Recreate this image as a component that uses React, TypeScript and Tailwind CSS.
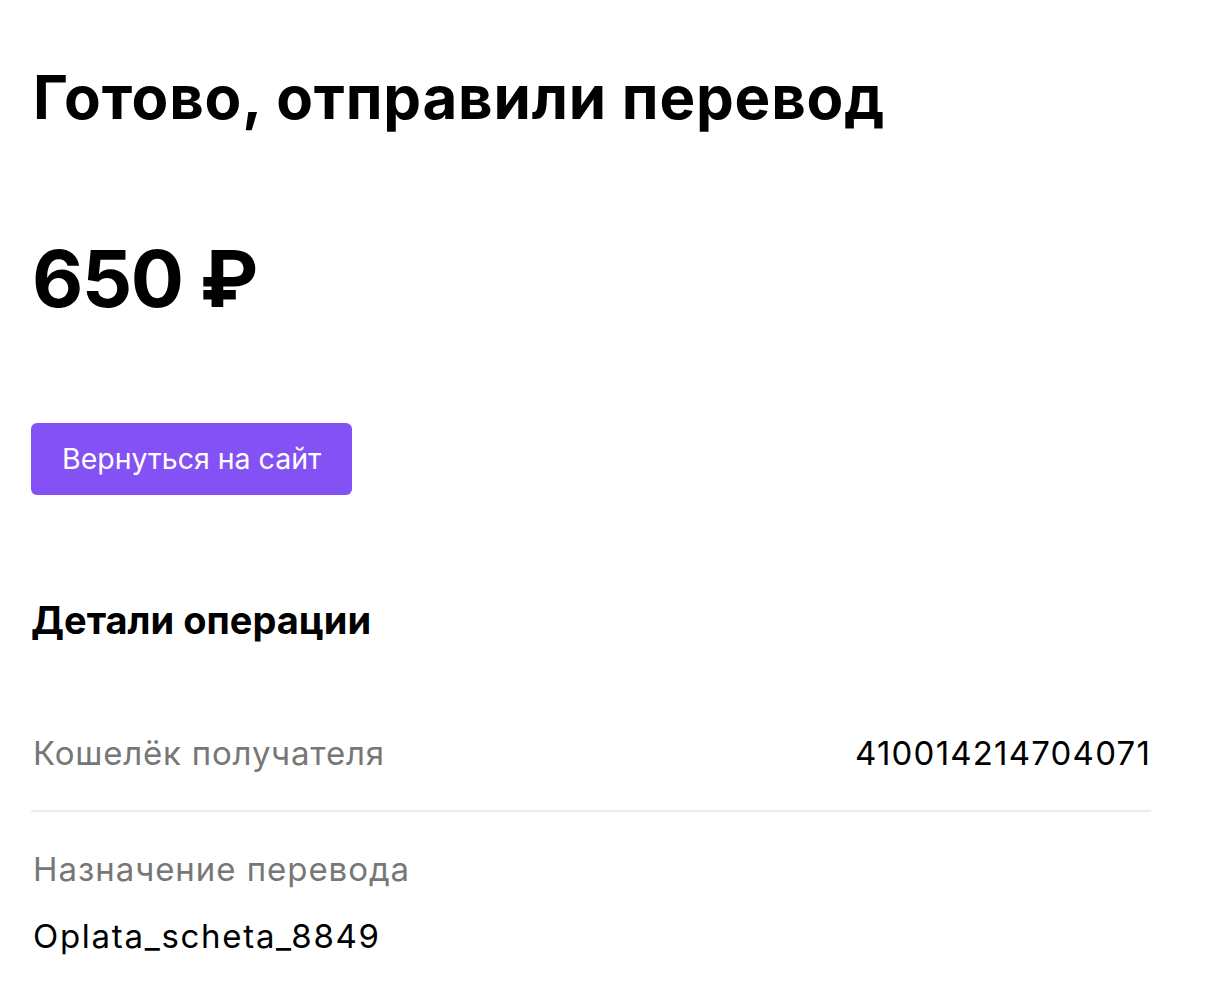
export default function App() {
  return (
    <div className="min-h-screen bg-white text-black">
      <div className="w-[1120px] ml-[31px] pt-[57px] font-['Inter',sans-serif]">
        <h1 className="text-[60px] leading-[80px] font-bold tracking-[0.8px] ml-[2px]">Готово, отправили перевод</h1>
        <div className="mt-[91px] text-[79px] leading-[100px] font-bold tracking-[-1.5px] ml-[1px]">650 ₽</div>
        <button className="mt-[95px] h-[72px] px-[31px] rounded-[6px] bg-[#8451F4] text-white text-[28.5px]">Вернуться на сайт</button>
        <h2 className="mt-[100px] text-[38px] leading-[50px] font-bold">Детали операции</h2>
        <div className="mt-[84px] flex justify-between items-center pb-[31px] border-b-2 border-[#ebebeb]">
          <span className="text-[33px] text-[#777777] tracking-[0.8px] ml-[2px]">Кошелёк получателя</span>
          <span className="text-[33px] tracking-[1.2px]">410014214704071</span>
        </div>
        <div className="pt-[33px] text-[33px] text-[#777777] tracking-[0.95px] ml-[2px]">Назначение перевода</div>
        <div className="mt-[18px] text-[33px] tracking-[1.7px] ml-[2px]">Oplata_scheta_8849</div>
      </div>
    </div>
  );
}
